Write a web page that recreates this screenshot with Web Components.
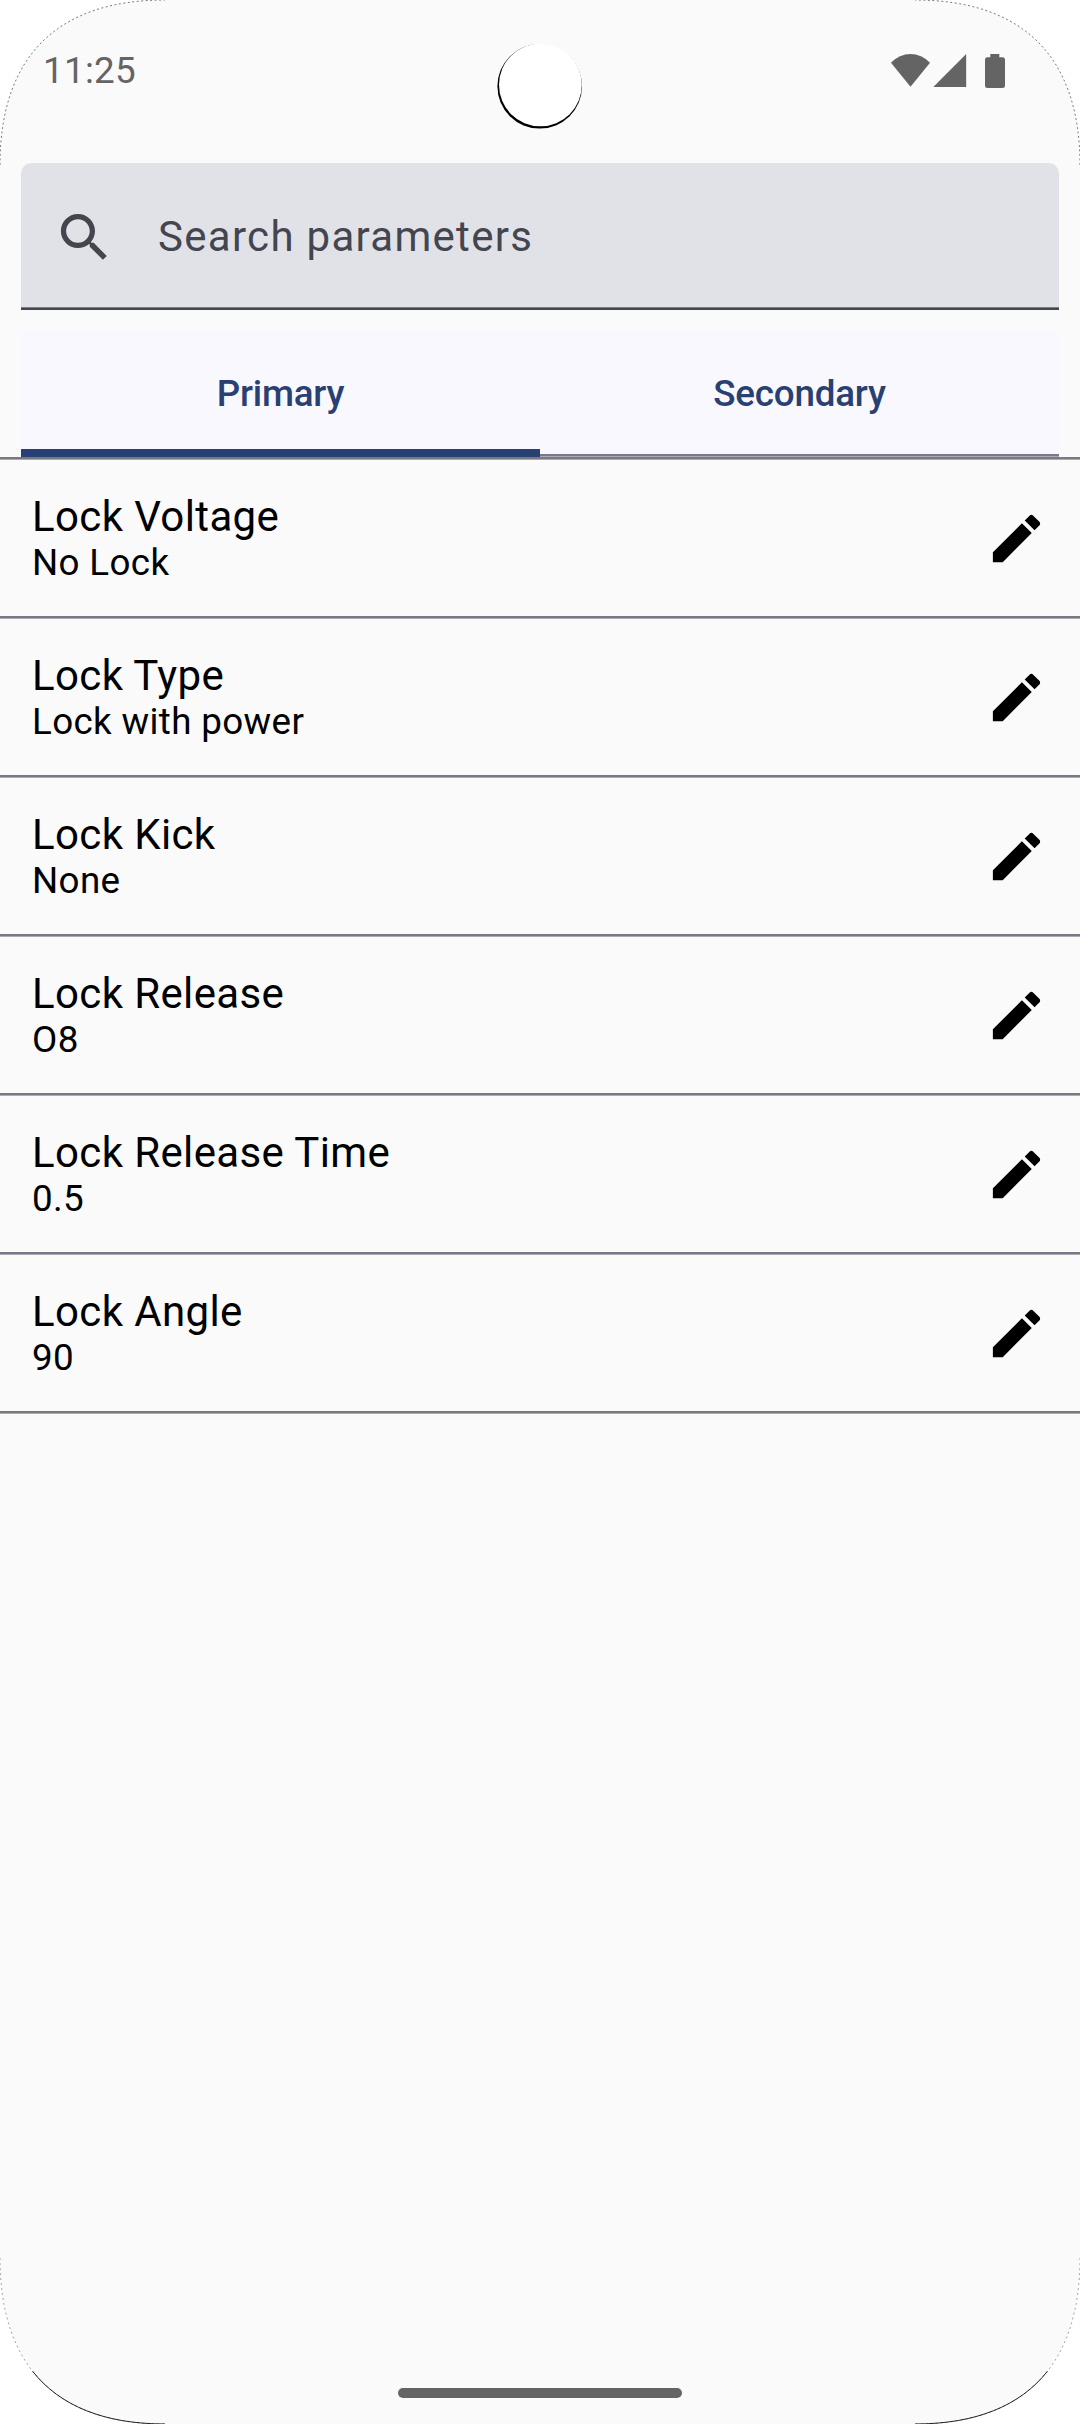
<!DOCTYPE html>
<html lang="en">
<head>
<meta charset="utf-8">
<title>Parameters</title>
<style>
html,body{margin:0;padding:0;background:#fff}
body{font-family:Roboto,"Noto Sans",sans-serif;width:1080px;height:2424px;overflow:hidden}
</style>
</head>
<body>
<device-screen>
  <status-bar slot="status" time="11:25"></status-bar>
  <search-field placeholder="Search parameters"></search-field>
  <tab-strip>
    <tab-item selected>Primary</tab-item>
    <tab-item>Secondary</tab-item>
  </tab-strip>
  <param-list>
    <param-row><span>Lock Voltage</span><span slot="value">No Lock</span></param-row>
    <param-row><span>Lock Type</span><span slot="value">Lock with power</span></param-row>
    <param-row><span>Lock Kick</span><span slot="value">None</span></param-row>
    <param-row><span>Lock Release</span><span slot="value">O8</span></param-row>
    <param-row><span>Lock Release Time</span><span slot="value">0.5</span></param-row>
    <param-row><span>Lock Angle</span><span slot="value">90</span></param-row>
  </param-list>
</device-screen>
<script>
function define(name, html, setup) {
  const template = document.createElement('template');
  template.innerHTML = html;
  customElements.define(name, class extends HTMLElement {
    constructor() {
      super();
      this.attachShadow({ mode: 'open' }).append(template.content.cloneNode(true));
    }
    connectedCallback() { if (setup) setup(this, this.shadowRoot); }
  });
}

define('device-screen', `
<style>
:host{display:flex;flex-direction:column;position:relative;width:1080px;height:2424px;background:#fafafa;overflow:hidden}
main{flex:1;display:flex;flex-direction:column}
footer{display:flex;justify-content:center;padding-bottom:26px}
.pill{width:284px;height:10px;border-radius:5px;background:#646464}
.bezel{position:absolute;inset:0;pointer-events:none}
</style>
<slot name="status"></slot>
<main><slot></slot></main>
<footer><div class="pill"></div></footer>
<svg class="bezel" width="1080" height="2424" viewBox="0 0 1080 2424">
  <g fill="#fff">
    <path d="M0 0V165C0 57 57 0 165 0Z"/>
    <path d="M1080 0V165C1080 57 1023 0 915 0Z"/>
    <path d="M0 2424V2258C0 2367 57 2424 165 2424Z"/>
    <path d="M1080 2424V2258C1080 2367 1023 2424 915 2424Z"/>
  </g>
  <g fill="none" stroke="#000">
    <g stroke-width=".7" stroke-opacity=".75" stroke-dasharray="2 2.5">
      <path d="M0 165C0 57 57 0 165 0"/>
      <path d="M1080 165C1080 57 1023 0 915 0"/>
    </g>
    <g stroke-width=".6" stroke-opacity=".6" stroke-dasharray="2 3">
      <path d="M0 2258C0 2367 57 2424 165 2424"/>
      <path d="M1080 2258C1080 2367 1023 2424 915 2424"/>
    </g>
    <g stroke-width="1" stroke-opacity=".85" stroke-dasharray="0 120 400 0">
      <path d="M0 2258C0 2367 57 2424 165 2424"/>
      <path d="M1080 2258C1080 2367 1023 2424 915 2424"/>
    </g>
  </g>
  <circle cx="539.7" cy="86.3" r="42.3" fill="#000"/>
  <circle cx="540.4" cy="84.9" r="41.4" fill="#fff"/>
</svg>`);

define('status-bar', `
<style>
:host{display:flex;justify-content:space-between;align-items:flex-start;box-sizing:border-box;height:163px;padding:48px 75px 0 43px;color:#646464}
.time{font-size:36.75px;line-height:44px;letter-spacing:.3px;padding-top:1px}
.icons{display:flex;padding-top:6px}
svg{display:block;fill:currentColor}
</style>
<span class="time"></span>
<div class="icons">
<svg width="114" height="34" viewBox="891 54 114 34">
  <path d="M891 62.7Q899.5 54 910.5 54T930 62.7L910.5 86.8Z"/>
  <path d="M933.3 87L966.2 54V87Z"/>
  <path d="M990.3 57.3V54H999.3V57.3H1002.5Q1005 57.3 1005 59.8V85.5Q1005 88 1002.5 88H987.5Q985 88 985 85.5V59.8Q985 57.3 987.5 57.3Z"/>
</svg>
</div>`, (el, root) => { root.querySelector('.time').textContent = el.getAttribute('time'); });

define('search-field', `
<style>
:host{display:flex;align-items:center;box-sizing:border-box;height:147px;margin:0 21px;padding:1px 31.5px 0;gap:42.5px;background:linear-gradient(#7d7d86 0 0) 0 144px/100% 1px no-repeat,linear-gradient(#44464f 0 0) 0 145px/100% 2px no-repeat,#e1e2e8;border-radius:10.5px 10.5px 0 0;color:#44464f}
span{font-size:42px;line-height:63px;letter-spacing:1.3px;padding-bottom:2px}
svg{display:block;fill:currentColor}
</style>
<svg width="63" height="63" viewBox="0 0 24 24"><path d="M15.5 14h-.79l-.28-.27C15.41 12.59 16 11.11 16 9.5 16 5.91 13.09 3 9.5 3S3 5.91 3 9.5 5.91 16 9.5 16c1.61 0 3.09-.59 4.23-1.57l.27.28v.79l5 4.99L20.49 19l-4.99-5zm-6 0C7.01 14 5 11.99 5 9.5S7.01 5 9.5 5 14 7.01 14 9.5 11.99 14 9.5 14z"/></svg>
<span></span>`, (el, root) => { root.querySelector('span').textContent = el.getAttribute('placeholder'); });

define('tab-strip', `
<style>
:host{display:flex;height:126px;margin:21px 21px 0;background:linear-gradient(#797883 0 0) 0 123px/100% 2px no-repeat,linear-gradient(#adaab5 0 0) 0 125px/100% 1px no-repeat,#f9f8ff}
</style><slot></slot>`);

define('tab-item', `
<style>
:host{flex:1;display:flex;align-items:center;justify-content:center;box-sizing:border-box;color:#294172;font-size:36.75px;font-weight:500;line-height:52.5px;letter-spacing:-.2px}
:host([selected]){background:linear-gradient(#294172 0 0) 0 118px/100% 8px no-repeat}
</style><slot></slot>`);

define('param-list', `
<style>
:host{display:flex;flex-direction:column;border-top:2px solid #797883;box-shadow:inset 0 1px #adaab5;padding-top:1px}
</style><slot></slot>`);

define('param-row', `
<style>
:host{display:flex;align-items:center;justify-content:space-between;box-sizing:border-box;height:159px;padding:0 32px 3px;background:linear-gradient(#797883 0 0) 0 156px/100% 2px no-repeat,linear-gradient(#adaab5 0 0) 0 158px/100% 1px no-repeat;color:#000}
.text{display:flex;flex-direction:column;padding-top:2px}
.label{font-size:42px;line-height:48px;letter-spacing:.38px}
.value{font-size:36.75px;line-height:44px;letter-spacing:.36px}
svg{display:block}
</style>
<div class="text"><div class="label"><slot></slot></div><div class="value"><slot name="value"></slot></div></div>
<svg width="63" height="63" viewBox="0 0 24 24"><path d="M3 17.25V21h3.75L17.81 9.94l-3.75-3.75L3 17.25zM20.71 7.04c.39-.39.39-1.02 0-1.41l-2.34-2.34c-.39-.39-1.02-.39-1.41 0l-1.83 1.83 3.75 3.75 1.83-1.83z"/></svg>`);
</script>
</body>
</html>
